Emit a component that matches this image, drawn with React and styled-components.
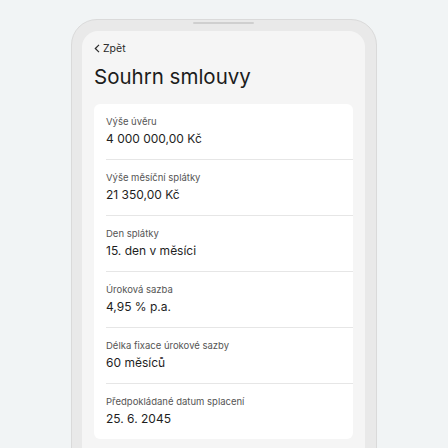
import React from "react";
import styled, { createGlobalStyle } from "styled-components";

const GlobalStyle = createGlobalStyle`
  html, body {
    margin: 0;
    padding: 0;
    background: #f1f4f5;
    overflow: hidden;
    font-family: Inter, "Noto Sans", sans-serif;
  }
`;

const Page = styled.div`
  width: 448px;
  height: 448px;
  display: flex;
  justify-content: center;
  padding-top: 19px;
  box-sizing: border-box;
  overflow: hidden;
`;

const Phone = styled.div`
  position: relative;
  width: 306px;
  height: 460px;
  flex-shrink: 0;
  box-sizing: border-box;
  padding: 11px 11px 0 10px;
  background: #e9e9e9;
  border: 1px solid #dadada;
  border-radius: 26px;
`;

const Notch = styled.div`
  position: absolute;
  top: 2px;
  left: 121px;
  width: 61px;
  height: 2px;
  border-radius: 1px;
  background: #cfcfcf;
`;

const Screen = styled.div`
  height: 100%;
  background: #f5f5f5;
  border-radius: 16px 16px 0 0;
  padding: 10px 12px 0;
  box-sizing: border-box;
`;

const Back = styled.div`
  display: flex;
  align-items: center;
  gap: 3px;
  height: 14px;
  font-size: 10.5px;
  color: #2a2a2a;
`;

const Title = styled.h1`
  margin: 7px 0 12px;
  font-size: 20.5px;
  line-height: 30px;
  font-weight: 400;
  color: #1c1c1c;
`;

const Card = styled.div`
  background: #fff;
  border-radius: 6px;
`;

const Row = styled.div`
  display: flex;
  flex-direction: column;
  gap: 3px;
  margin-left: 12px;
  padding: 12px 12px 12px 0;
  border-bottom: ${p => (p.$last ? "none" : "1px solid #e6e6e6")};
`;

const Label = styled.span`
  font-size: 9.5px;
  line-height: 12px;
  color: #555;
`;

const Value = styled.span`
  font-size: 12px;
  line-height: 16px;
  color: #1e1e1e;
`;

const items = [
  ["Výše úvěru", "4 000 000,00 Kč"],
  ["Výše měsíční splátky", "21 350,00 Kč"],
  ["Den splátky", "15. den v měsíci"],
  ["Úroková sazba", "4,95 % p.a."],
  ["Délka fixace úrokové sazby", "60 měsíců"],
  ["Předpokládané datum splacení", "25. 6. 2045"],
];

const App = () => {
  return (
    <>
      <GlobalStyle />
      <Page>
        <Phone>
          <Notch />
          <Screen>
            <Back>
              <svg width="6" height="9" viewBox="0 0 6 9">
                <polyline points="5,0.8 1.3,4.5 5,8.2" fill="none" stroke="#2a2a2a" strokeWidth="1.2" />
              </svg>
              Zpět
            </Back>
            <Title>Souhrn smlouvy</Title>
            <Card>
              {items.map(([label, value], i) => (
                <Row key={label} $last={i === items.length - 1}>
                  <Label>{label}</Label>
                  <Value>{value}</Value>
                </Row>
              ))}
            </Card>
          </Screen>
        </Phone>
      </Page>
    </>
  );
};

export default App;
